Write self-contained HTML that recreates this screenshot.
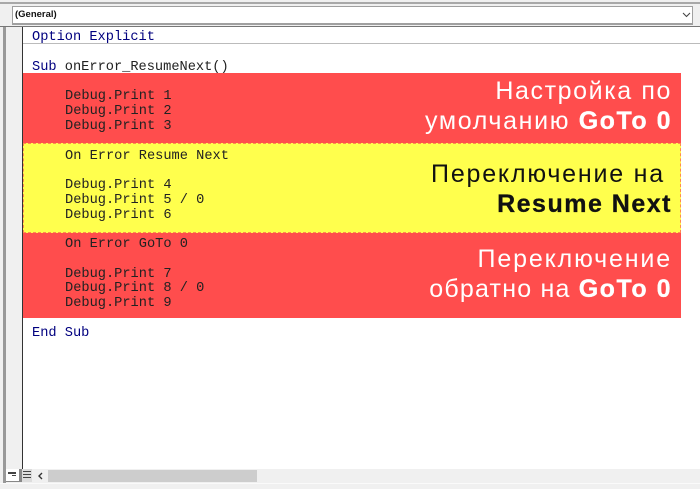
<!DOCTYPE html>
<html><head><meta charset="utf-8">
<style>
html,body{margin:0;padding:0;background:#f0f0f0}
#p{position:relative;width:700px;height:489px;overflow:hidden;background:#f0f0f0}
.a{position:absolute}
.c{position:absolute;font:13.67px/15px "Liberation Mono",monospace;white-space:pre;color:#222}
.b{color:#00007f}
.s{position:absolute;right:28px;font-family:"Liberation Sans",sans-serif;font-size:25px;line-height:32px;white-space:nowrap;letter-spacing:1.6px;font-weight:400}
.s b{font-weight:700;letter-spacing:1.5px;-webkit-text-stroke:.3px currentColor}
</style></head><body><div id="p">
<div class="a" style="left:0;top:2px;width:700px;height:2px;background:#a8a8a8"></div>
<div class="a" style="left:12px;top:6px;width:679px;height:16px;background:#fff;border:1px solid #a0a0a0;border-bottom:2px solid #a0a0a0"></div>
<div class="a" style="left:15px;top:8px;font:bold 9.5px/13px 'Liberation Sans',sans-serif;color:#111">(General)</div>
<svg class="a" style="left:682px;top:12px" width="9" height="6"><path d="M1 1L4.5 4.5L8 1" fill="none" stroke="#444" stroke-width="1.1"/></svg>
<div class="a" style="left:0;top:26px;width:700px;height:1px;background:#777"></div>
<div class="a" style="left:3px;top:27px;width:3px;height:407px;background:#999"></div>
<div class="a" style="left:6px;top:27px;width:16px;height:442px;background:#f0f0f0"></div>
<div class="a" style="left:22px;top:27px;width:1px;height:442px;background:#333"></div>
<div class="a" style="left:23px;top:27px;width:677px;height:442px;background:#fff"></div>
<div class="a" style="left:23px;top:43px;width:677px;height:1px;background:#bbb"></div>

<div class="a" style="left:23px;top:73px;width:658px;height:245px;background:#ff4d4d"></div>
<div class="a" style="left:23px;top:143px;width:658px;height:90px;background:#ffff4d;box-sizing:border-box;border:1px dashed #ff8a4d"></div>

<div class="c" style="left:32px;top:30px;color:#00007f">Option Explicit</div>
<div class="c" style="left:32px;top:60px"><span class="b">Sub</span> onError_ResumeNext()</div>
<div class="c" style="left:65px;top:89px">Debug.Print 1</div>
<div class="c" style="left:65px;top:104px">Debug.Print 2</div>
<div class="c" style="left:65px;top:119px">Debug.Print 3</div>
<div class="c" style="left:65px;top:149px">On Error Resume Next</div>
<div class="c" style="left:65px;top:178px">Debug.Print 4</div>
<div class="c" style="left:65px;top:193px">Debug.Print 5 / 0</div>
<div class="c" style="left:65px;top:208px">Debug.Print 6</div>
<div class="c" style="left:65px;top:237px">On Error GoTo 0</div>
<div class="c" style="left:65px;top:267px">Debug.Print 7</div>
<div class="c" style="left:65px;top:281px">Debug.Print 8 / 0</div>
<div class="c" style="left:65px;top:296px">Debug.Print 9</div>
<div class="c" style="left:32px;top:326px;color:#00007f">End Sub</div>

<div class="s" style="top:75px;color:#fff">Настройка по</div>
<div class="s" style="top:105px;color:#fff;letter-spacing:1.65px">умолчанию <b>GoTo 0</b></div>
<div class="s" style="top:158px;color:#111;right:35px;letter-spacing:1.8px">Переключение на</div>
<div class="s" style="top:188px;color:#111"><b>Resume Next</b></div>
<div class="s" style="top:243px;color:#fff;letter-spacing:1.85px">Переключение</div>
<div class="s" style="top:273px;color:#fff;letter-spacing:1.2px">обратно на <b>GoTo 0</b></div>

<div class="a" style="left:0;top:469px;width:700px;height:13px;background:#f0f0f0"></div>
<div class="a" style="left:3px;top:434px;width:3px;height:50px;background:#999"></div>
<div class="a" style="left:6px;top:469px;width:13px;height:12px;background:#fff;border:1px solid #888;border-top:0;border-left:0"></div>
<div class="a" style="left:8px;top:472px;width:8px;height:2px;background:#444"></div>
<div class="a" style="left:12px;top:475px;width:4px;height:1px;background:#444"></div>
<div class="a" style="left:20px;top:469px;width:12px;height:13px;background:#ddd;border-left:2px solid #888;box-sizing:border-box"></div>
<div class="a" style="left:23px;top:471px;width:8px;height:8px;background:repeating-linear-gradient(#444 0 1px,transparent 1px 3px)"></div>
<svg class="a" style="left:37px;top:472px" width="7" height="8"><path d="M5 1L2 4L5 7" fill="none" stroke="#333" stroke-width="1.4"/></svg>
<div class="a" style="left:48px;top:470px;width:209px;height:12px;background:#cdcdcd"></div>
<div class="a" style="left:0;top:483px;width:700px;height:1px;background:#fafafa"></div>
</div></body></html>
